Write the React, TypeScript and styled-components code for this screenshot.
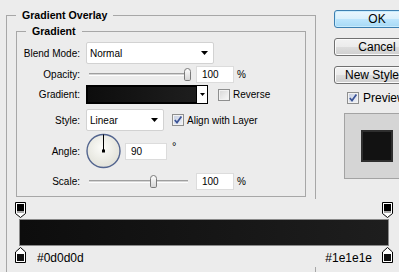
import styled, { createGlobalStyle } from "styled-components";

const GlobalStyle = createGlobalStyle`
  html, body {
    margin: 0;
    padding: 0;
    background: #ececec;
  }
  body {
    font-family: "Liberation Sans", Arial, sans-serif;
    font-size: 10px;
    color: #000;
  }
`;

const Screen = styled.div`
  display: flex;
  align-items: flex-start;
  width: 399px;
  height: 272px;
  padding-left: 6px;
  box-sizing: border-box;
  overflow: hidden;
  background: #ececec;
`;

const Group = styled.fieldset<{ $width: number }>`
  flex-shrink: 0;
  width: ${(p) => p.$width}px;
  min-width: 0;
  box-sizing: border-box;
  border: 1px solid #a7a7a7;
`;

const OuterGroup = styled(Group)`
  margin: 8px 0 0;
  padding: 0 0 12px;
`;

const InnerGroup = styled(Group)`
  margin: 1px 0 0 9px;
  padding: 0 0 6px;
`;

const Legend = styled.legend`
  margin-left: 9px;
  padding: 0 6px;
  font-size: 10.6px;
  font-weight: bold;
  line-height: 15px;
`;

const Row = styled.div<{ $top: number; $height: number }>`
  display: flex;
  align-items: center;
  height: ${(p) => p.$height}px;
  margin-top: ${(p) => p.$top}px;
`;

const Label = styled.span`
  flex-shrink: 0;
  width: 63px;
  margin-right: 6px;
  text-align: right;
`;

const Select = styled.div<{ $width: number }>`
  display: flex;
  align-items: center;
  justify-content: space-between;
  width: ${(p) => p.$width}px;
  height: 22px;
  box-sizing: border-box;
  padding: 0 5px 0 3px;
  border: 1px solid #d2d2d2;
  border-radius: 2px;
  background: #fff;
`;

const SliderBox = styled.div`
  position: relative;
  display: flex;
  align-items: center;
  width: 104px;
  height: 13px;
  padding-left: 3px;
  box-sizing: border-box;
  flex-shrink: 0;
`;

const Track = styled.div`
  width: 99px;
  height: 1px;
  border-top: 1px solid #9f9f9f;
  border-bottom: 1px solid #fdfdfd;
  background: #d4d4d4;
`;

const Thumb = styled.div`
  position: absolute;
  top: 0;
  width: 7px;
  height: 13px;
  box-sizing: border-box;
  border: 1px solid #7a7a7a;
  border-radius: 4px 4px 2px 2px;
  background: linear-gradient(#fdfdfd, #d6d6d6);
`;

const Field = styled.div<{ $width: number; $left: number }>`
  display: flex;
  align-items: center;
  width: ${(p) => p.$width}px;
  height: 17px;
  margin-left: ${(p) => p.$left}px;
  padding-left: 5px;
  box-sizing: border-box;
  border: 1px solid #dcdcdc;
  background: #fff;
`;

const Unit = styled.span`
  margin-left: 3px;
`;

const Degree = styled.span`
  align-self: flex-start;
  margin: 8px 0 0 5px;
  line-height: 10px;
  font-size: 11px;
`;

const GradientPicker = styled.div`
  display: flex;
  width: 122px;
  height: 19px;
  box-sizing: border-box;
  border: 1px solid #000;
`;

const Swatch = styled.div`
  flex: 1;
  border: 1px solid #000;
  background: linear-gradient(90deg, #0d0d0d, #1e1e1e);
`;

const PickerArrow = styled.div`
  display: flex;
  align-items: center;
  justify-content: center;
  width: 10px;
  background: #fff;
`;

const Box = styled.span<{ $checked?: boolean; $left: number }>`
  display: flex;
  align-items: center;
  justify-content: center;
  flex-shrink: 0;
  width: 12px;
  height: 12px;
  margin-left: ${(p) => p.$left}px;
  box-sizing: border-box;
  border: 1px solid #8e8f8f;
  box-shadow: inset 0 0 0 1px #f2f2f2;
  background: ${(p) =>
    p.$checked
      ? "linear-gradient(135deg, #c4cde0, #f2f4f9)"
      : "linear-gradient(135deg, #d6d6d6, #fafafa)"};
`;

const BoxText = styled.span<{ $size?: number }>`
  margin-left: ${(p) => (p.$size ? 4 : 3)}px;
  font-size: ${(p) => p.$size ?? 10}px;
`;

const Editor = styled.div`
  width: 378px;
  margin: 2px 0 0 8px;
  padding: 3px 0 4px;
  background: #ececec;
`;

const StopRow = styled.div`
  display: flex;
  align-items: flex-end;
  height: 16px;
`;

const Bar = styled.div`
  height: 27px;
  margin: 1px 4px;
  box-sizing: border-box;
  border: 1px solid #8a8a8a;
  background: linear-gradient(90deg, #0d0d0d, #1e1e1e);
`;

const Hex = styled.span<{ $side: "left" | "right" }>`
  margin: 0 ${(p) => (p.$side === "right" ? 10 : 0)}px -2px
    ${(p) => (p.$side === "left" ? 11 : 0)}px;
  font-size: 12px;
  line-height: 14px;
`;

const Spacer = styled.div`
  flex: 1;
`;

const Side = styled.div`
  display: flex;
  flex-direction: column;
  flex-shrink: 0;
  width: 86px;
  margin: 10px 0 0 18px;
`;

const Button = styled.div<{ $primary?: boolean }>`
  display: flex;
  align-items: center;
  justify-content: center;
  height: 18px;
  margin-bottom: 10px;
  box-sizing: border-box;
  border: 1px solid ${(p) => (p.$primary ? "#3c7fb1" : "#707070")};
  border-radius: 3px;
  box-shadow: inset 0 0 0 1px ${(p) => (p.$primary ? "#c8ecfd" : "#fbfbfb")};
  background: ${(p) =>
    p.$primary
      ? "linear-gradient(#eaf6fd 0%, #d9f0fc 50%, #bee6fd 50%, #a7d9f5 100%)"
      : "linear-gradient(#f2f2f2 0%, #ebebeb 50%, #dddddd 50%, #cfcfcf 100%)"};
  font-size: 12px;
  white-space: nowrap;
`;

const PreviewToggle = styled.div`
  display: flex;
  align-items: center;
  height: 12px;
  margin-top: -2px;
`;

const PreviewBox = styled.div`
  display: flex;
  align-items: center;
  justify-content: center;
  width: 66px;
  height: 66px;
  margin: 9px 0 0 10px;
  box-sizing: border-box;
  border: 1px solid #a3a3a3;
  background: #d5d5d5;
`;

const PreviewSwatch = styled.div`
  width: 32px;
  height: 32px;
  box-sizing: border-box;
  border: 2px solid #2e2e2e;
  background: #121212;
`;

const DownArrow = () => (
  <svg width="7" height="4" viewBox="0 0 7 4">
    <polygon points="0,0 7,0 3.5,4" fill="#000" />
  </svg>
);

const Check = () => (
  <svg width="10" height="10" viewBox="0 0 10 10">
    <path d="M1.8 5 L4 7.6 L8.4 1.6" fill="none" stroke="#3a5396" strokeWidth="1.7" />
  </svg>
);

function Slider({ value, min, max }: { value: number; min: number; max: number }) {
  const left = 3 + ((value - min) / (max - min)) * 95;
  return (
    <SliderBox>
      <Track />
      <Thumb style={{ left }} />
    </SliderBox>
  );
}

const Dial = () => (
  <svg width="35" height="36" viewBox="0 0 35 36">
    <defs>
      <radialGradient id="dialFill" cx="45%" cy="40%" r="65%">
        <stop offset="0" stopColor="#fcfcf9" />
        <stop offset="1" stopColor="#dfdfd6" />
      </radialGradient>
    </defs>
    <circle cx="17.5" cy="18" r="16.5" fill="url(#dialFill)" stroke="#53658f" strokeWidth="1.4" />
    <line x1="17.5" y1="18" x2="17.5" y2="1.5" stroke="#000" strokeWidth="1" />
    <rect x="16" y="16.5" width="3" height="3" fill="#000" />
  </svg>
);

const OpacityStop = () => (
  <svg width="11" height="16" viewBox="0 0 11 16">
    <polygon points="0.5,0.5 10.5,0.5 10.5,11.5 5.5,15.5 0.5,11.5" fill="#fff" stroke="#000" />
    <rect x="2" y="2" width="7" height="7" fill="#000" />
    <rect x="2" y="9" width="7" height="2" fill="#a8a8a8" />
  </svg>
);

const ColorStop = () => (
  <svg width="11" height="16" viewBox="0 0 11 16">
    <polygon points="5.5,0.5 10.5,5 10.5,15.5 0.5,15.5 0.5,5" fill="#fff" stroke="#000" />
    <rect x="2" y="7" width="7" height="7" fill="#111" />
  </svg>
);

export default function App() {
  return (
    <>
      <GlobalStyle />
      <Screen>
        <OuterGroup $width={310}>
          <Legend>Gradient Overlay</Legend>
          <InnerGroup $width={290}>
            <Legend>Gradient</Legend>
            <Row $top={3} $height={22}>
              <Label>Blend Mode:</Label>
              <Select $width={128}>
                Normal
                <DownArrow />
              </Select>
            </Row>
            <Row $top={2} $height={17}>
              <Label>Opacity:</Label>
              <Slider value={100} min={0} max={100} />
              <Field $width={38} $left={6}>100</Field>
              <Unit>%</Unit>
            </Row>
            <Row $top={2} $height={19}>
              <Label>Gradient:</Label>
              <GradientPicker>
                <Swatch />
                <PickerArrow>
                  <svg width="5" height="3" viewBox="0 0 5 3">
                    <polygon points="0,0 5,0 2.5,3" fill="#000" />
                  </svg>
                </PickerArrow>
              </GradientPicker>
              <Box $left={10} />
              <BoxText>Reverse</BoxText>
            </Row>
            <Row $top={5} $height={22}>
              <Label>Style:</Label>
              <Select $width={78}>
                Linear
                <DownArrow />
              </Select>
              <Box $left={8} $checked>
                <Check />
              </Box>
              <BoxText>Align with Layer</BoxText>
            </Row>
            <Row $top={2} $height={36}>
              <Label>Angle:</Label>
              <Dial />
              <Field $width={42} $left={4}>90</Field>
              <Degree>°</Degree>
            </Row>
            <Row $top={4} $height={17}>
              <Label>Scale:</Label>
              <Slider value={100} min={10} max={150} />
              <Field $width={38} $left={6}>100</Field>
              <Unit>%</Unit>
            </Row>
          </InnerGroup>
          <Editor>
            <StopRow>
              <OpacityStop />
              <Spacer />
              <OpacityStop />
            </StopRow>
            <Bar />
            <StopRow>
              <ColorStop />
              <Hex $side="left">#0d0d0d</Hex>
              <Spacer />
              <Hex $side="right">#1e1e1e</Hex>
              <ColorStop />
            </StopRow>
          </Editor>
        </OuterGroup>
        <Side>
          <Button $primary>OK</Button>
          <Button>Cancel</Button>
          <Button>New Style...</Button>
          <PreviewToggle>
            <Box $left={13} $checked>
              <Check />
            </Box>
            <BoxText $size={12}>Preview</BoxText>
          </PreviewToggle>
          <PreviewBox>
            <PreviewSwatch />
          </PreviewBox>
        </Side>
      </Screen>
    </>
  );
}
